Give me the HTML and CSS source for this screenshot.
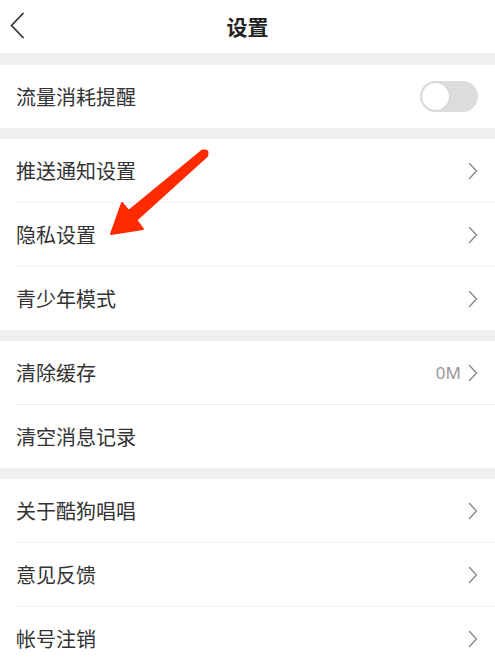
FILE: index.html
```html
<!DOCTYPE html>
<html lang="zh-CN">
<head>
<meta charset="utf-8">
<title>设置</title>
<link rel="stylesheet" href="styles.css">
</head>
<body>
<div class="page">
  <header class="header">
    <svg class="back" width="16" height="27" viewBox="0 0 16 27"><path d="M14 1.5 L2.5 13.5 L14 25.5" fill="none" stroke="#333" stroke-width="1.8" stroke-linecap="round" stroke-linejoin="round"/></svg>
    <h1 class="title">设置</h1>
  </header>

  <section class="group">
    <div class="row"><span class="label">流量消耗提醒</span><span class="toggle"><span class="knob"></span></span></div>
  </section>

  <section class="group">
    <div class="row"><span class="label">推送通知设置</span><svg class="chev" width="10" height="18" viewBox="0 0 10 18"><path d="M1.5 1.5 L8.5 9 L1.5 16.5" fill="none" stroke="#8a8a8a" stroke-width="1.4" stroke-linecap="round" stroke-linejoin="round"/></svg></div>
    <div class="row sep"><span class="label">隐私设置</span><svg class="chev" width="10" height="18" viewBox="0 0 10 18"><path d="M1.5 1.5 L8.5 9 L1.5 16.5" fill="none" stroke="#8a8a8a" stroke-width="1.4" stroke-linecap="round" stroke-linejoin="round"/></svg></div>
    <div class="row sep"><span class="label">青少年模式</span><svg class="chev" width="10" height="18" viewBox="0 0 10 18"><path d="M1.5 1.5 L8.5 9 L1.5 16.5" fill="none" stroke="#8a8a8a" stroke-width="1.4" stroke-linecap="round" stroke-linejoin="round"/></svg></div>
  </section>

  <section class="group">
    <div class="row"><span class="label">清除缓存</span><span class="right"><span class="value">0M</span><svg class="chev" width="10" height="18" viewBox="0 0 10 18"><path d="M1.5 1.5 L8.5 9 L1.5 16.5" fill="none" stroke="#8a8a8a" stroke-width="1.4" stroke-linecap="round" stroke-linejoin="round"/></svg></span></div>
    <div class="row sep"><span class="label">清空消息记录</span></div>
  </section>

  <section class="group">
    <div class="row"><span class="label">关于酷狗唱唱</span><svg class="chev" width="10" height="18" viewBox="0 0 10 18"><path d="M1.5 1.5 L8.5 9 L1.5 16.5" fill="none" stroke="#8a8a8a" stroke-width="1.4" stroke-linecap="round" stroke-linejoin="round"/></svg></div>
    <div class="row sep"><span class="label">意见反馈</span><svg class="chev" width="10" height="18" viewBox="0 0 10 18"><path d="M1.5 1.5 L8.5 9 L1.5 16.5" fill="none" stroke="#8a8a8a" stroke-width="1.4" stroke-linecap="round" stroke-linejoin="round"/></svg></div>
    <div class="row sep"><span class="label">帐号注销</span><svg class="chev" width="10" height="18" viewBox="0 0 10 18"><path d="M1.5 1.5 L8.5 9 L1.5 16.5" fill="none" stroke="#8a8a8a" stroke-width="1.4" stroke-linecap="round" stroke-linejoin="round"/></svg></div>
  </section>

  <svg class="annot" width="495" height="669" viewBox="0 0 495 669">
    <polygon points="202.7,150.3 128.6,210.9 122,203 111,234 143,229 136.4,220 207.3,155.7" fill="#ff2a00" stroke="#ff2a00" stroke-width="2" stroke-linejoin="round"/>
    <circle cx="205" cy="153" r="3.5" fill="#ff2a00"/>
  </svg>
</div>
</body>
</html>
```

FILE: styles.css
```css
html, body {
  margin: 0;
  padding: 0;
  background: #efeff0;
}
body {
  font-family: "Noto Sans CJK SC", "Noto Sans", sans-serif;
  color: #333;
}
.page {
  position: relative;
  width: 495px;
  height: 669px;
  overflow: hidden;
  background: #efeff0;
}
.header {
  height: 53px;
  background: #fff;
  display: flex;
  align-items: center;
  justify-content: center;
  position: relative;
  margin-bottom: 12px;
}
.back {
  position: absolute;
  left: 9px;
  top: 12px;
}
.title {
  margin: 0;
  font-size: 21px;
  font-weight: 700;
  color: #222;
  line-height: 1;
}
.group {
  background: #fff;
  margin-bottom: 11px;
}
.row {
  height: 63px;
  display: flex;
  align-items: center;
  justify-content: space-between;
  padding: 0 17px 0 16px;
  box-sizing: border-box;
  position: relative;
}
.row.sep {
  height: 64px;
  border-top: 1px solid #f1f1f1;
  margin-left: 16px;
  padding-left: 0;
}
.label {
  font-size: 20px;
  color: #333;
  line-height: 1;
}
.chev {
  display: block;
}
.right {
  display: flex;
  align-items: center;
  gap: 7px;
}
.value {
  font-size: 17px;
  color: #999;
  font-family: "Noto Sans", "Noto Sans CJK SC", sans-serif;
}
.toggle {
  width: 58px;
  height: 31px;
  border-radius: 16px;
  background: #dcdcdc;
  position: relative;
  box-sizing: border-box;
  display: flex;
  align-items: center;
  padding-left: 2px;
}
.knob {
  width: 27px;
  height: 27px;
  border-radius: 50%;
  background: #fff;
  box-shadow: 0 0 0 0.5px #cfcfcf;
}
.annot {
  position: absolute;
  left: 0;
  top: 0;
  pointer-events: none;
}
```
